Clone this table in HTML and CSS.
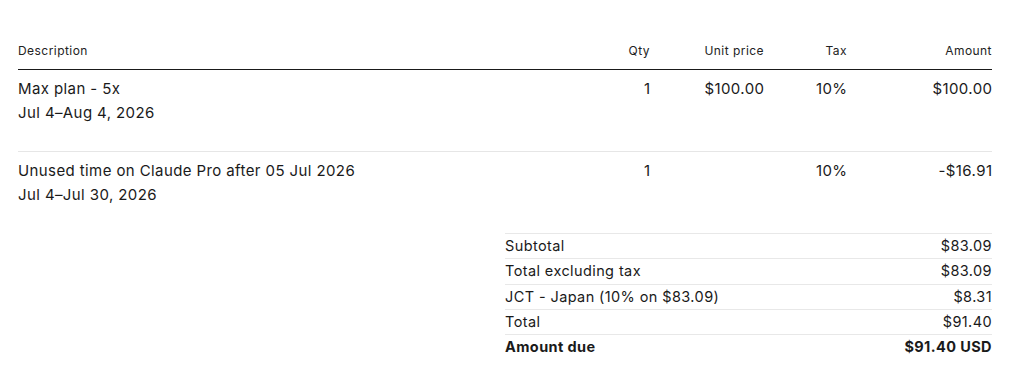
FILE: index.html
```html
<!DOCTYPE html>
<html lang="en">
<head>
<meta charset="utf-8">
<title>Invoice</title>
<link rel="stylesheet" href="styles.css">
</head>
<body>
<main class="invoice">
  <div class="lines">
    <div class="row head">
      <div class="c desc">Description</div>
      <div class="c num">Qty</div>
      <div class="c num">Unit price</div>
      <div class="c num">Tax</div>
      <div class="c num">Amount</div>
    </div>
    <div class="row item">
      <div class="c desc">Max plan - 5x<br>Jul 4–Aug 4, 2026</div>
      <div class="c num">1</div>
      <div class="c num">$100.00</div>
      <div class="c num">10%</div>
      <div class="c num">$100.00</div>
    </div>
    <div class="row item">
      <div class="c desc">Unused time on Claude Pro after 05 Jul 2026<br>Jul 4–Jul 30, 2026</div>
      <div class="c num">1</div>
      <div class="c num"></div>
      <div class="c num">10%</div>
      <div class="c num">-$16.91</div>
    </div>
  </div>
  <div class="summary">
    <div class="srow"><span>Subtotal</span><span>$83.09</span></div>
    <div class="srow"><span>Total excluding tax</span><span>$83.09</span></div>
    <div class="srow"><span>JCT - Japan (10% on $83.09)</span><span>$8.31</span></div>
    <div class="srow"><span>Total</span><span>$91.40</span></div>
    <div class="srow due"><span>Amount due</span><span>$91.40 USD</span></div>
  </div>
</main>
</body>
</html>
```
FILE: styles.css
```css
html, body {
  margin: 0;
  padding: 0;
  background: #ffffff;
}
body {
  font-family: Inter, "Noto Sans", sans-serif;
  color: #1a1a1a;
}
.invoice {
  padding: 43px 32px 0 18px;
}
.row {
  display: grid;
  grid-template-columns: 1fr 100px 114px 83px 145px;
}
.c.num {
  text-align: right;
}
.head {
  font-size: 12px;
  letter-spacing: 0.45px;
  line-height: 16px;
  color: #222;
  padding-bottom: 10px;
  border-bottom: 1.5px solid #1a1a1a;
}
.item {
  font-size: 15px;
  letter-spacing: 0.4px;
  line-height: 24px;
  padding: 7px 0 26px;
}
.item .num {
  margin-right: -0.4px;
}
.item + .item {
  border-top: 1px solid #e6e6e6;
}
.summary {
  margin-left: 487px;
  font-size: 14.5px;
  letter-spacing: 0.4px;
}
.srow {
  display: flex;
  justify-content: space-between;
  border-top: 1px solid #e8e8e8;
  height: 25.25px;
  line-height: 24px;
  box-sizing: border-box;
}
.srow.due {
  font-weight: 700;
}
```
